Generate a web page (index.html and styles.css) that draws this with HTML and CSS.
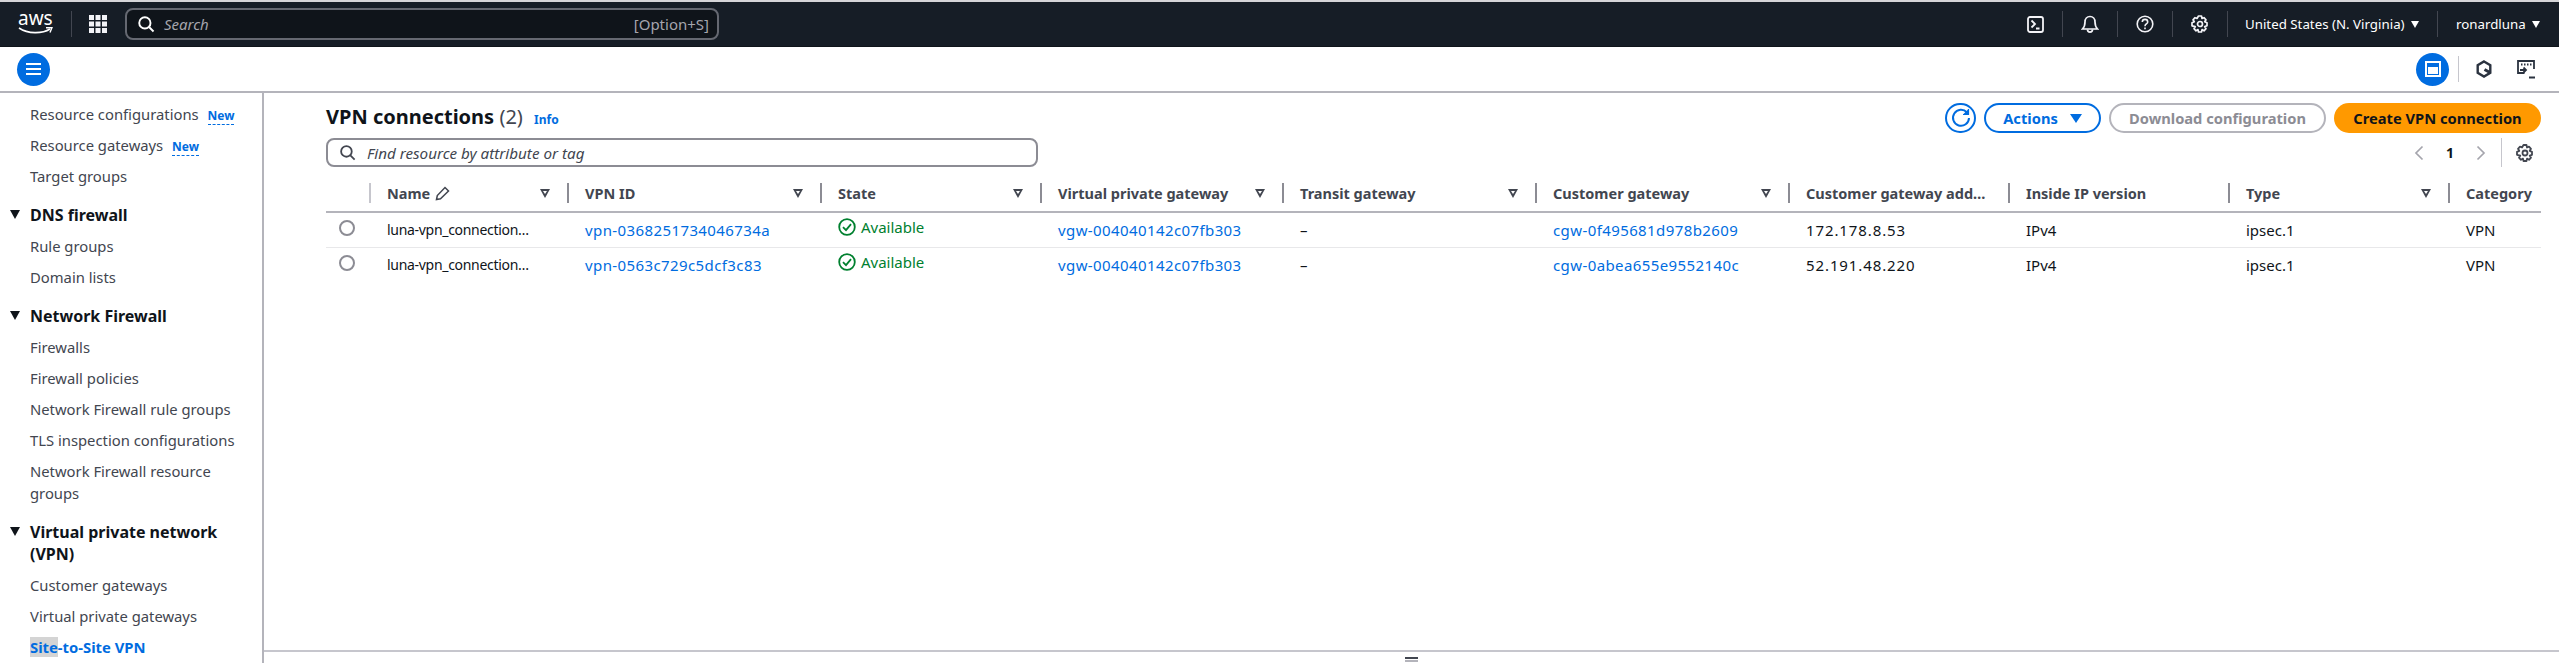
FILE: index.html
```html
<!DOCTYPE html>
<html lang="en">
<head>
    <meta charset="UTF-8">
    <title>VPN connections</title>
    <link rel="stylesheet" href="styles.css">
</head>
<body>
    <header class="topbar">
        <div class="logo">
            <span class="logo-text">aws</span>
            <svg class="logo-smile" width="35" height="8" viewBox="0 0 35 8"><path d="M1 1c9 6 23 6 31 1" fill="none" stroke="#fff" stroke-width="1.6"/><path d="M28 .8l6-.3-2 5" fill="none" stroke="#fff" stroke-width="1.4"/></svg>
        </div>
        <span class="top-sep top-sep-logo"></span>
        <svg class="apps" width="18" height="18" viewBox="0 0 18 18" fill="#f3f3f7"><rect width="5" height="5"/><rect x="6.500" width="5" height="5"/><rect x="13" width="5" height="5"/><rect y="6.500" width="5" height="5"/><rect x="6.500" y="6.500" width="5" height="5"/><rect x="13" y="6.500" width="5" height="5"/><rect y="13" width="5" height="5"/><rect x="6.500" y="13" width="5" height="5"/><rect x="13" y="13" width="5" height="5"/></svg>
        <div class="top-search">
            <svg width="18" height="18" viewBox="0 0 16 16" fill="none" stroke="#fff" stroke-width="1.7"><circle cx="7" cy="7" r="5"/><path d="M10.7 10.7l4 4"/></svg>
            <span class="top-search-text">Search</span>
            <span class="top-search-key">[Option+S]</span>
        </div>
        <div class="top-right">
            <span class="top-icon"><svg width="17" height="17" viewBox="0 0 17 17" fill="none" stroke="#f3f3f7" stroke-width="1.8"><rect x="1" y="1" width="15" height="15" rx="2"/><path d="M4.500 4.500L8 8l-3.500 3.500M9 12.500h3.500"/></svg></span>
            <span class="top-icon"><svg width="18" height="20" viewBox="0 0 18 20" fill="none" stroke="#f3f3f7" stroke-width="1.7"><path d="M1.500 15h15c-2-2-2.500-3.500-2.500-7 0-3-2-5.500-5-5.500S4 5 4 8c0 3.500-.5 5-2.500 7z"/><path d="M6.500 15.500c0 3.500 5 3.500 5 0"/></svg></span>
            <span class="top-icon"><svg width="18" height="18" viewBox="0 0 18 18" fill="none" stroke="#f3f3f7" stroke-width="1.6"><circle cx="9" cy="9" r="7.800"/><path d="M6.300 7c0-3.500 5.400-3.500 5.400 0 0 2-2.700 2-2.700 4.200M9 12.500v1.800"/></svg></span>
            <span class="top-icon"><svg width="18" height="18" viewBox="0 0 18 18" fill="none" stroke="#f3f3f7" stroke-width="1.7"><path d="M7.500 1h3l.5 2.500 2-.8 2 2.100-1.300 2 2.300 1v3l-2.300.8 1.300 2.100-2 2.100-2-1.200-.5 2.400h-3l-.5-2.400-2 1.200-2-2.100 1.300-2.100L1 10.800v-3l2.300-1L2 4.800l2-2.100 2 .8z" stroke-linejoin="round"/><circle cx="9" cy="9" r="2.500"/></svg></span>
            <span class="top-menu top-menu-region">United States (N. Virginia)<i class="caret"></i></span>
            <span class="top-menu top-menu-user">ronardluna<i class="caret"></i></span>
        </div>
    </header>

    <div class="subbar">
        <button class="round-btn">
            <svg width="15" height="14" viewBox="0 0 15 14" fill="#fff"><rect y="1" width="15" height="2"/><rect y="6" width="15" height="2"/><rect y="11" width="15" height="2"/></svg>
        </button>
        <div class="subbar-right">
            <button class="round-btn">
                <svg width="16" height="16" viewBox="0 0 16 16"><rect x="1" y="1" width="14" height="14" fill="none" stroke="#fff" stroke-width="2"/><rect x="3" y="6" width="10" height="7" fill="#fff"/></svg>
            </button>
            <span class="sub-sep"></span>
            <svg class="sub-icon" width="16" height="18" viewBox="0 0 16 18" fill="none" stroke="#2b3340" stroke-width="2.400"><path d="M8 1.500l6.300 3.700v7.600L8 16.500l-6.300-3.700V5.200z"/><path d="M8.500 9.500l5.500 3" stroke-width="3"/></svg>
            <svg class="sub-icon sub-icon-last" width="18" height="19" viewBox="0 0 18 19" fill="none" stroke="#2b3340" stroke-width="1.800"><path d="M7.500 13H1V1h16v8"/><path d="M4 4.500h1.500M7 4.500h1.500M10 4.500h1.500M13 4.500h1.500" stroke-width="2"/><path d="M3 10h6M6.500 7.500L9 10l-2.500 2.500M12 17.500h6"/></svg>
        </div>
    </div>

    <div class="layout">
        <nav class="sidebar">
            <a class="nav-item">Resource configurations <span class="new-tag">New</span></a>
            <a class="nav-item">Resource gateways <span class="new-tag">New</span></a>
            <a class="nav-item">Target groups</a>

            <h3 class="nav-group">DNS firewall</h3>
            <a class="nav-item">Rule groups</a>
            <a class="nav-item">Domain lists</a>

            <h3 class="nav-group">Network Firewall</h3>
            <a class="nav-item">Firewalls</a>
            <a class="nav-item">Firewall policies</a>
            <a class="nav-item">Network Firewall rule groups</a>
            <a class="nav-item">TLS inspection configurations</a>
            <a class="nav-item">Network Firewall resource groups</a>

            <h3 class="nav-group">Virtual private network (VPN)</h3>
            <a class="nav-item">Customer gateways</a>
            <a class="nav-item">Virtual private gateways</a>
            <a class="nav-item nav-active"><span class="nav-mark">Site</span>-to-Site VPN</a>
        </nav>

        <main class="content">
            <div class="page-head">
                <h1>VPN connections <span class="count">(2)</span> <a class="info">Info</a></h1>
                <div class="actions">
                    <button class="btn btn-icon"><svg width="20" height="20" viewBox="0 0 20 20" fill="none" stroke="#006ce0" stroke-width="2"><path d="M16 4.500A8 8 0 1 0 18 10"/><path d="M17.500 1v5.500H12" fill="#006ce0" stroke-width="1.200"/></svg></button>
                    <button class="btn btn-actions">Actions<i class="caret caret-blue"></i></button>
                    <button class="btn btn-disabled">Download configuration</button>
                    <button class="btn btn-primary">Create VPN connection</button>
                </div>
            </div>

            <div class="filter-row">
                <div class="filter">
                    <svg width="17" height="17" viewBox="0 0 16 16" fill="none" stroke="#424650" stroke-width="1.700"><circle cx="7" cy="7" r="5"/><path d="M10.700 10.700l4 4"/></svg>
                    <span>Find resource by attribute or tag</span>
                </div>
                <div class="pager">
                    <svg width="10" height="16" viewBox="0 0 10 16" fill="none" stroke="#a5a5ad" stroke-width="1.700"><path d="M8.500 1.500L2 8l6.500 6.500"/></svg>
                    <span class="page-num">1</span>
                    <svg width="10" height="16" viewBox="0 0 10 16" fill="none" stroke="#a5a5ad" stroke-width="1.700"><path d="M1.500 1.500L8 8l-6.500 6.500"/></svg>
                    <span class="pager-sep"></span>
                    <svg width="18" height="18" viewBox="0 0 18 18" fill="none" stroke="#424650" stroke-width="1.800"><path d="M7.500 1h3l.5 2.500 2-.8 2 2.100-1.300 2 2.300 1v3l-2.300.8 1.300 2.100-2 2.100-2-1.200-.5 2.400h-3l-.5-2.400-2 1.200-2-2.100 1.300-2.100L1 10.800v-3l2.300-1L2 4.800l2-2.100 2 .8z" stroke-linejoin="round"/><circle cx="9" cy="9" r="2.500"/></svg>
                </div>
            </div>

            <table class="vpn-table">
                <colgroup>
                    <col class="c-select"><col class="c-name"><col class="c-wide"><col class="c-mid"><col class="c-transit"><col class="c-wide"><col class="c-wide"><col class="c-mid"><col class="c-mid"><col class="c-mid"><col class="c-cat">
                </colgroup>
                <thead>
                    <tr>
                        <th></th>
                        <th><div class="th-in th-first"><span>Name <svg class="pencil" width="15" height="15" viewBox="0 0 15 15" fill="none" stroke="#424650" stroke-width="1.500"><path d="M1.500 13.500l.8-4L10 1.500l3.500 3.500-8 7.700z"/></svg></span><i class="sort"></i></div></th>
                        <th><div class="th-in"><span>VPN ID</span><i class="sort"></i></div></th>
                        <th><div class="th-in"><span>State</span><i class="sort"></i></div></th>
                        <th><div class="th-in"><span>Virtual private gateway</span><i class="sort"></i></div></th>
                        <th><div class="th-in"><span>Transit gateway</span><i class="sort"></i></div></th>
                        <th><div class="th-in"><span>Customer gateway</span><i class="sort"></i></div></th>
                        <th><div class="th-in"><span>Customer gateway add…</span></div></th>
                        <th><div class="th-in"><span>Inside IP version</span></div></th>
                        <th><div class="th-in"><span>Type</span><i class="sort"></i></div></th>
                        <th><div class="th-in"><span>Category</span></div></th>
                    </tr>
                </thead>
                <tbody>
                    <tr>
                        <td class="radio-cell"><i class="radio"></i></td>
                        <td class="name">luna-vpn_connection…</td>
                        <td><a>vpn-0368251734046734a</a></td>
                        <td><span class="state"><svg width="18" height="18" viewBox="0 0 18 18" fill="none" stroke="#00802f" stroke-width="1.800"><circle cx="9" cy="9" r="7.800"/><path d="M5 9.200l3 3 5-6"/></svg>Available</span></td>
                        <td><a>vgw-004040142c07fb303</a></td>
                        <td>–</td>
                        <td><a>cgw-0f495681d978b2609</a></td>
                        <td class="ip">172.178.8.53</td>
                        <td>IPv4</td>
                        <td>ipsec.1</td>
                        <td>VPN</td>
                    </tr>
                    <tr>
                        <td class="radio-cell"><i class="radio"></i></td>
                        <td class="name">luna-vpn_connection…</td>
                        <td><a>vpn-0563c729c5dcf3c83</a></td>
                        <td><span class="state"><svg width="18" height="18" viewBox="0 0 18 18" fill="none" stroke="#00802f" stroke-width="1.800"><circle cx="9" cy="9" r="7.800"/><path d="M5 9.200l3 3 5-6"/></svg>Available</span></td>
                        <td><a>vgw-004040142c07fb303</a></td>
                        <td>–</td>
                        <td><a>cgw-0abea655e9552140c</a></td>
                        <td class="ip">52.191.48.220</td>
                        <td>IPv4</td>
                        <td>ipsec.1</td>
                        <td>VPN</td>
                    </tr>
                </tbody>
            </table>

            <div class="split-bar"><i class="split-handle"></i></div>
        </main>
    </div>
</body>
</html>
```

FILE: styles.css
```css
* {
    box-sizing: border-box;
}
html {
    height: 663px;
    overflow: hidden;
}
body {
    margin: 0;
    height: 663px;
    overflow: hidden;
    background-color: white;
    font-family: "Noto Sans", sans-serif;
    font-size: 14px;
    color: #0f141a;
}
button {
    font-family: inherit;
}
a {
    color: #006ce0;
}

/* top bar */
.topbar {
    height: 47px;
    background-color: #161d26;
    border-top: 2px solid #d5d5d8;
    border-bottom: 1px solid #0f141a;
    display: flex;
    align-items: center;
    color: white;
}
.logo {
    width: 70px;
    padding-left: 18px;
    display: flex;
    flex-direction: column;
}
.logo-text {
    font-size: 19px;
    line-height: 16px;
    margin-top: -4px;
}
.logo-smile {
    margin-top: 1px;
}
.top-sep {
    width: 1px;
    height: 26px;
    background-color: #424650;
}
.top-sep-logo {
    margin-left: 1px;
}
.apps {
    margin-left: 17px;
}
.top-search {
    width: 594px;
    height: 32px;
    margin-left: 18px;
    border: 2px solid #656871;
    border-radius: 8px;
    background-color: #0f141a;
    display: flex;
    align-items: center;
    padding: 0 8px 0 10px;
}
.top-search-text {
    margin-left: 9px;
    font-size: 15px;
    font-style: italic;
    color: #a5a5ad;
}
.top-search-key {
    margin-left: auto;
    font-size: 15px;
    color: #a5a5ad;
}
.top-right {
    margin-left: auto;
    display: flex;
    align-items: center;
}
.top-icon {
    width: 55px;
    height: 26px;
    display: flex;
    align-items: center;
    justify-content: center;
    border-right: 1px solid #424650;
}
.top-menu {
    display: flex;
    align-items: center;
    height: 26px;
    font-size: 13.300px;
    padding-left: 17px;
}
.top-menu-region {
    width: 210px;
    border-right: 1px solid #424650;
}
.top-menu-user {
    width: 121px;
    padding-left: 18px;
}
.caret {
    display: inline-block;
    margin-left: 6px;
    border-left: 4.5px solid transparent;
    border-right: 4.5px solid transparent;
    border-top: 7px solid white;
}
.caret-blue {
    margin-left: 12px;
    border-left-width: 6px;
    border-right-width: 6px;
    border-top: 9px solid #006ce0;
}

/* second bar */
.subbar {
    height: 46px;
    border-bottom: 2px solid #b4b4bb;
    display: flex;
    align-items: center;
    padding: 0 24px 0 17px;
}
.round-btn {
    width: 33px;
    height: 33px;
    border: none;
    border-radius: 50%;
    background-color: #006ce0;
    display: flex;
    align-items: center;
    justify-content: center;
    padding: 0;
}
.subbar-right {
    margin-left: auto;
    display: flex;
    align-items: center;
}
.sub-sep {
    width: 1px;
    height: 26px;
    margin: 0 17px 0 9px;
    background-color: #c6c6cd;
}
.sub-icon-last {
    margin-left: 25px;
}

/* side navigation */
.layout {
    display: flex;
    height: 570px;
}
.sidebar {
    width: 264px;
    flex-shrink: 0;
    height: 570px;
    overflow: hidden;
    border-right: 2px solid #b4b4bb;
    padding: 10px 20px 0 30px;
    color: #424650;
}
.nav-item {
    display: block;
    font-size: 14.800px;
    color: #424650;
    line-height: 22px;
    margin-bottom: 9px;
}
.new-tag {
    margin-left: 5px;
    font-size: 12px;
    line-height: 1;
    font-weight: 700;
    color: #006ce0;
    border-bottom: 1px dashed #006ce0;
}
.nav-group {
    position: relative;
    margin: 17px 0 9px;
    font-size: 16px;
    line-height: 22px;
    font-weight: 700;
    color: #0f141a;
}
.nav-group::before {
    content: "";
    position: absolute;
    left: -20px;
    top: 6px;
    border-left: 5.5px solid transparent;
    border-right: 5.5px solid transparent;
    border-top: 9px solid #0f141a;
}
.nav-active {
    color: #006ce0;
    font-weight: 700;
}
.nav-mark {
    background-color: #d4d4d4;
}

/* main area */
.content {
    position: relative;
    flex: 1;
    padding: 10px 18px 0 62px;
}
.page-head {
    display: flex;
    justify-content: space-between;
    align-items: center;
    height: 30px;
}
h1 {
    margin: 0;
    font-size: 20px;
    font-weight: 700;
    line-height: 30px;
}
.count {
    font-weight: 400;
    color: #424650;
}
.info {
    margin-left: 6px;
    font-size: 12px;
}
.actions {
    display: flex;
    gap: 8px;
}
.btn {
    height: 30px;
    border-radius: 15px;
    font-size: 14.700px;
    font-weight: 700;
    padding: 0;
    background-color: white;
    display: flex;
    align-items: center;
    justify-content: center;
}
.btn-icon {
    width: 31px;
    border: 2px solid #006ce0;
}
.btn-actions {
    width: 117px;
    border: 2px solid #006ce0;
    color: #006ce0;
}
.btn-disabled {
    width: 217px;
    border: 2px solid #b4b4bb;
    color: #8c8c94;
}
.btn-primary {
    width: 207px;
    border: none;
    background-color: #ff9900;
    color: #0f141a;
}
.filter-row {
    display: flex;
    justify-content: space-between;
    align-items: center;
    margin-top: 5px;
    height: 29px;
}
.filter {
    width: 712px;
    height: 29px;
    border: 2px solid #8c8c94;
    border-radius: 8px;
    display: flex;
    align-items: center;
    padding-left: 11px;
    font-size: 15.200px;
    font-style: italic;
    color: #424650;
}
.filter span {
    margin-left: 11px;
}
.pager {
    display: flex;
    align-items: center;
    height: 29px;
    padding-right: 7px;
}
.page-num {
    margin: 0 22px;
    font-weight: 700;
}
.pager-sep {
    width: 1px;
    height: 29px;
    margin: 0 14px 0 15px;
    background-color: #c6c6cd;
}

/* table */
.vpn-table {
    width: 2215px;
    margin-top: 9px;
    border-collapse: collapse;
    table-layout: fixed;
}
.c-select { width: 43px; }
.c-name { width: 198px; }
.c-wide { width: 253px; }
.c-mid { width: 220px; }
.c-transit { width: 242px; }
.c-cat { width: 93px; }
th {
    height: 36px;
    padding: 0;
    border-bottom: 2px solid #b4b4bb;
    text-align: left;
    font-size: 14.500px;
    font-weight: 700;
    color: #424650;
}
.th-in {
    height: 20px;
    border-left: 2px solid #8c8c94;
    margin-top: -1px;
    padding: 0 17px 0 16px;
    display: flex;
    justify-content: space-between;
    align-items: center;
    white-space: nowrap;
    overflow: hidden;
}
.th-first {
    border-left-color: #c6c6cd;
}
.pencil {
    vertical-align: -2px;
    margin-left: 1px;
}
.sort {
    position: relative;
    flex-shrink: 0;
    border-left: 5px solid transparent;
    border-right: 5px solid transparent;
    border-top: 9px solid #424650;
}
.sort::after {
    content: "";
    position: absolute;
    left: -2px;
    top: -7px;
    border-left: 2px solid transparent;
    border-right: 2px solid transparent;
    border-top: 3.500px solid white;
}
td {
    height: 35px;
    padding: 0 0 0 18px;
    border-bottom: 1px solid #e8e8ea;
    white-space: nowrap;
    font-size: 15px;
}
td a {
    letter-spacing: .4px;
}
td.name {
    font-size: 14px;
    letter-spacing: -.3px;
}
.ip {
    letter-spacing: .9px;
}
tbody tr:last-child td {
    border-bottom: none;
}
.radio-cell {
    padding-left: 13px;
}
.radio {
    display: block;
    width: 16px;
    height: 16px;
    margin-top: -4px;
    border: 2px solid #8c8c94;
    border-radius: 50%;
}
.state {
    display: inline-flex;
    align-items: center;
    gap: 5px;
    color: #00802f;
    margin-top: -2px;
}

/* bottom split panel */
.split-bar {
    position: absolute;
    left: 0;
    right: 0;
    bottom: 0;
    height: 13px;
    border-top: 2px solid #c6c6cd;
    background-color: white;
    display: flex;
    justify-content: center;
}
.split-handle {
    display: block;
    width: 13px;
    height: 5px;
    margin-top: 5px;
    border-top: 2px solid #424650;
    border-bottom: 2px solid #b4b4bb;
}
```
